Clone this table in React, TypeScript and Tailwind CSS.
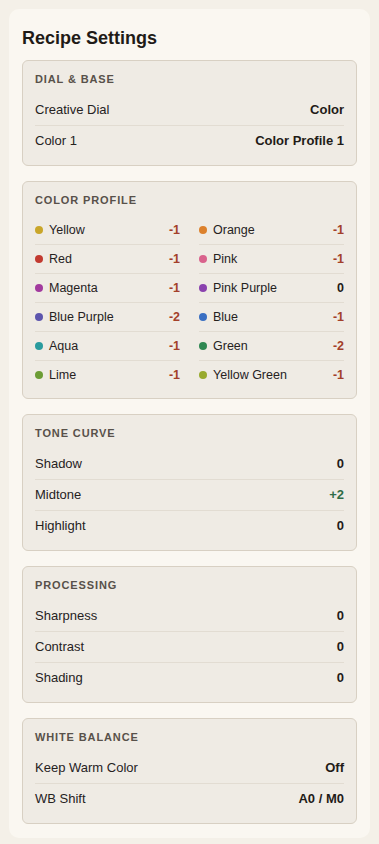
import React from 'react';

type Row = { label: string; value: string };
type Swatch = { name: string; dot: string; value: string };

const DIAL: Row[] = [
  { label: 'Creative Dial', value: 'Color' },
  { label: 'Color 1', value: 'Color Profile 1' },
];

const PROFILE: Swatch[] = [
  { name: 'Yellow', dot: '#c9a62a', value: '-1' },
  { name: 'Orange', dot: '#dc812c', value: '-1' },
  { name: 'Red', dot: '#c23a30', value: '-1' },
  { name: 'Pink', dot: '#d9628c', value: '-1' },
  { name: 'Magenta', dot: '#a23a9e', value: '-1' },
  { name: 'Pink Purple', dot: '#8a42ae', value: '0' },
  { name: 'Blue Purple', dot: '#5d55ad', value: '-2' },
  { name: 'Blue', dot: '#3a6fc2', value: '-1' },
  { name: 'Aqua', dot: '#2a9b9e', value: '-1' },
  { name: 'Green', dot: '#2f8852', value: '-2' },
  { name: 'Lime', dot: '#6c9c35', value: '-1' },
  { name: 'Yellow Green', dot: '#98aa2e', value: '-1' },
];

const TONE: Row[] = [
  { label: 'Shadow', value: '0' },
  { label: 'Midtone', value: '+2' },
  { label: 'Highlight', value: '0' },
];

const PROCESSING: Row[] = [
  { label: 'Sharpness', value: '0' },
  { label: 'Contrast', value: '0' },
  { label: 'Shading', value: '0' },
];

const WB: Row[] = [
  { label: 'Keep Warm Color', value: 'Off' },
  { label: 'WB Shift', value: 'A0 / M0' },
];

// negative = rust, positive = green, zero/text = ink
const valueColor = (v: string) =>
  v.startsWith('-') ? 'text-[#a3402a]' : v.startsWith('+') ? 'text-[#2f6d48]' : 'text-[#1f1b17]';

const Card: React.FC<{ title: string; children: React.ReactNode }> = ({ title, children }) => (
  <section className="rounded-[6px] border border-[#d8d0c3] bg-[#efebe4] px-3 pt-[11px] pb-[9px]">
    <h3 className="mb-[9px] text-[11px] font-bold uppercase leading-[14px] tracking-[0.08em] text-[#58514a]">
      {title}
    </h3>
    {children}
  </section>
);

const Rows: React.FC<{ rows: Row[] }> = ({ rows }) => (
  <div>
    {rows.map((r, i) => (
      <div
        key={r.label}
        className={`flex h-[30px] items-center justify-between text-[13px] leading-4 ${
          i < rows.length - 1 ? 'box-content border-b border-[#e2dcd2]' : ''
        }`}
      >
        <span className="text-[#26221e]">{r.label}</span>
        <span className={`font-bold ${valueColor(r.value)}`}>{r.value}</span>
      </div>
    ))}
  </div>
);

export default function App() {
  return (
    <div
      className="min-h-screen bg-[#f4f0e8] p-[9px]"
      style={{ fontFamily: '"Liberation Sans", Arial, Helvetica, sans-serif' }}
    >
      <div className="rounded-[10px] bg-[#faf7f1] px-[13px] pt-[17px] pb-[14px]">
        <h1 className="mb-[10px] text-[18px] font-bold leading-6 text-[#1f1b17]">Recipe Settings</h1>

        <div className="flex flex-col gap-[15px]">
          <Card title="Dial & Base">
            <Rows rows={DIAL} />
          </Card>

          <Card title="Color Profile">
            <div className="mt-[1px] grid grid-cols-2 gap-x-[19px]">
              {PROFILE.map((s, i) => (
                <div
                  key={s.name}
                  className={`flex h-[28px] items-center text-[12.5px] leading-4 ${
                    i < PROFILE.length - 2 ? 'box-content border-b border-[#e2dcd2]' : ''
                  }`}
                >
                  <span className="mr-[6px] h-2 w-2 shrink-0 rounded-full" style={{ backgroundColor: s.dot }} />
                  <span className="flex-1 text-[#26221e]">{s.name}</span>
                  <span className={`font-bold ${valueColor(s.value)}`}>{s.value}</span>
                </div>
              ))}
            </div>
          </Card>

          <Card title="Tone Curve">
            <Rows rows={TONE} />
          </Card>

          <Card title="Processing">
            <Rows rows={PROCESSING} />
          </Card>

          <Card title="White Balance">
            <Rows rows={WB} />
          </Card>
        </div>
      </div>
    </div>
  );
}
